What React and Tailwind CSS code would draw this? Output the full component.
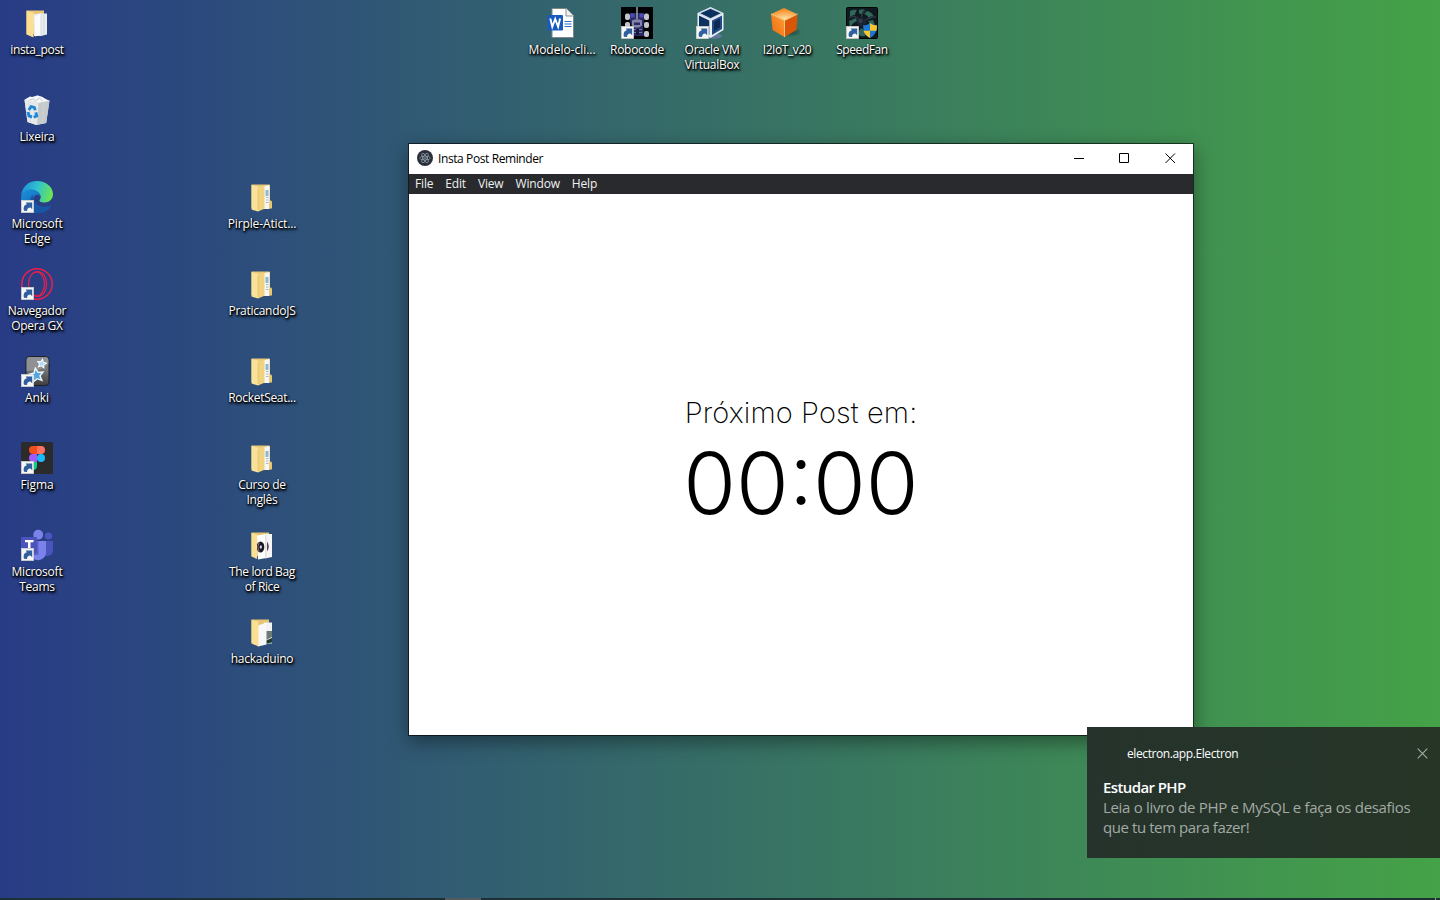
const Shortcut = () => (
  <g>
    <rect x=".3" y="19.300" width="12.400" height="12.400" fill="#f6f6f4" stroke="#cfcfcf" strokeWidth=".6" />
    <path d="M3 29.800C2 26 3.400 23.600 6 23.200L4.600 21.500h6.600v6.700L9.400 26.500c-2.400.2-3.400 1.200-3.300 3.600z" fill="#2f5f9e" />
  </g>
);

const Svg = ({ children }) => (
  <svg width="32" height="32" viewBox="0 0 32 32" className="block h-8 w-8 shrink-0">
    {children}
  </svg>
);

const FullFolder = () => (
  <Svg>
    <path d="M5.500 3.500H23q1 0 1 1V27H5.500z" fill="#e9c878" />
    <path d="M17 5.500 23.500 4v24H17z" fill="#f4f7f8" />
    <path d="M19.500 9h3v6h-3z" fill="#8fb9d8" />
    <path d="M20 16.500h2.500M20 19h2.500M20 21.500h2.500" stroke="#a9b7bf" />
    <path d="M23.500 19.500q2-.5 2.500 1v7h-3z" fill="#eac66c" />
    <path d="M5.500 4 12 5.500V30.500L5.500 28.500z" fill="#fbe29a" />
    <path d="M12 5.800 18.500 5v22.800L12 30.500z" fill="#f1d27e" />
    <path d="M12 8v21" stroke="#e0bc64" strokeWidth=".6" />
  </Svg>
);

const PostFolder = () => (
  <Svg>
    <path d="M5.500 3.500H23V27H5.500z" fill="#e7c572" />
    <path d="M12 7.500 18 6.500h8v21l-6 1.500h-7z" fill="#e9edf0" />
    <path d="M14 9.500 20 6v21.500l-6 2z" fill="#fbfbfb" />
    <path d="M20 7v21M23 7v21" stroke="#c7ced4" strokeWidth=".7" />
    <path d="M5.500 3.800 12.500 5.500V30.500L5.500 27.500z" fill="#fbdf92" />
  </Svg>
);

const DiscFolder = () => (
  <Svg>
    <path d="M5.500 3.500H23V27H5.500z" fill="#e7c572" />
    <path d="M18 5h8v23l-7 1.500z" fill="#f6f6f6" />
    <path d="M11 6.500 20 5v24l-8 1.500z" fill="#fff" />
    <path d="M19.800 6v23" stroke="#ccc" strokeWidth=".8" />
    <ellipse cx="14.500" cy="18" rx="3.800" ry="5.500" fill="#191b24" />
    <path d="M13.200 13.500q-3 4.500 0 9" stroke="#a3677d" fill="none" />
    <ellipse cx="14.800" cy="18" rx="1.100" ry="1.800" fill="#ddd" />
    <path d="M21 12.500q3.500 5 0 10" fill="#674151" />
    <path d="M5.500 3.800 11 5.500V30L5.500 27.500z" fill="#fbdf92" />
  </Svg>
);

const PhotoFolder = () => (
  <Svg>
    <path d="M5.500 3.500H23V27H5.500z" fill="#e7c572" />
    <path d="M18 6.500h8v21h-8z" fill="#f1f2f3" />
    <path d="M20 15h6v6l-6 3z" fill="#6c7b78" />
    <path d="M20 24.500 26 22v4.500l-6 1z" fill="#1f3a31" />
    <path d="M12 9.500 20.500 6.500v22l-8.500 2z" fill="#f8f8f8" />
    <path d="M5.500 3.800 12.500 5.500V30.500L5.500 27.500z" fill="#fbdf92" />
  </Svg>
);

const Bin = () => (
  <Svg>
    <path d="M3.500 5.500 14 2l14.500 4.500-3.300 22.500L15 31 6.500 28z" fill="#dfe2e4" />
    <path d="M3.500 6 17.500 9 16 31 6.500 28z" fill="#e6e8ea" />
    <path d="M17.500 9 28.500 6.500l-3.300 22.500L16 31z" fill="#c5cacd" />
    <path d="M4 5.500 9 2.500l4 1 3-2.300 5 1.500 6.500 4L18 8.500z" fill="#f7f8f8" />
    <path d="m8.500 6 4-1 2 2 4-3 3 3" stroke="#b3b9bd" strokeWidth=".8" fill="none" />
    <path d="M8 7.500 9.500 28M23 8.500 21 29" stroke="#d0d4d7" strokeWidth=".7" />
    <g fill="none" stroke="#1c87d6" strokeWidth="2.900">
      <path d="m7.800 16 2.300-3.400 3.200.8 1 2.800" />
      <path d="m7 18 1 4 3 1" />
      <path d="m12.700 23.300 3-1.400-.9-3.600" />
    </g>
  </Svg>
);

const Edge = () => (
  <Svg>
    <defs>
      <linearGradient id="edgeTop" x1="0" y1="0.300" x2="1" y2="0.500">
        <stop offset="0" stopColor="#1d8fd8" />
        <stop offset=".5" stopColor="#31c2d0" />
        <stop offset="1" stopColor="#6ce64e" />
      </linearGradient>
      <linearGradient id="edgeBody" x1="0" y1="0" x2=".6" y2="1">
        <stop offset="0" stopColor="#1b92dd" />
        <stop offset="1" stopColor="#1263b0" />
      </linearGradient>
    </defs>
    <path d="M0 15C1 6 7 0 16 0c9 0 16 6 16 13 0 5.500-4 8.500-8.500 8.500-4 0-6-1.300-4.500-3C21 15.500 19 12 15 10 10 7.500 3 9 0 15z" fill="url(#edgeTop)" />
    <path d="M0 16C1.500 10 6 8 10.500 8.500c5 .6 9 4 9 7.500-1-2.500-4-3-6-1-4 5 1 15.500 7 16.300C18.500 32 17 32 16 32 6 32-1 25 0 16z" fill="url(#edgeBody)" />
    <path d="M12 13.500c-1 6 4.500 12.300 11.500 12.300 3 .1 4.500-.5 6-1.200.7-.2 1 .3.700.8C27 30 22 32.500 16.500 32 9 30 6 19.500 12 13.500z" fill="#1757a6" />
    <Shortcut />
  </Svg>
);

const Opera = () => (
  <Svg>
    <g fill="none" stroke="#ee1e4e">
      <circle cx="16" cy="16" r="15.200" strokeWidth="1.500" />
      <ellipse cx="15.500" cy="16" rx="8" ry="12" strokeWidth="1.200" />
      <path d="M11 6C17 .5 25.500 5 25.500 16S17 31.500 11 26" strokeWidth="1.200" />
    </g>
    <Shortcut />
  </Svg>
);

const star = "M0-5.500 1.600-1.900 5.500-1.500 2.600 1.100 3.500 5 0 3 -3.500 5 -2.600 1.100 -5.500-1.500 -1.600-1.900z";

const Anki = () => (
  <Svg>
    <defs>
      <linearGradient id="ankiTile" x1="0" y1="0" x2="0" y2="1">
        <stop offset="0" stopColor="#777b7e" />
        <stop offset=".45" stopColor="#777" />
        <stop offset="1" stopColor="#3e3e40" />
      </linearGradient>
    </defs>
    <rect x="5" y="1.500" width="23" height="29" rx="3.500" fill="url(#ankiTile)" stroke="#1d1f24" />
    <path d="M5.500 16Q20 17 27.500 9V5q0-3-3-3H8.500q-3 0-3 3z" fill="#a4a6a8" opacity=".55" />
    <path d={star} transform="translate(20.800 8.500) rotate(10) scale(.8)" fill="#a8dcf8" stroke="#fff" strokeWidth="1.200" />
    <path d={star} transform="translate(15.500 20) rotate(-10) scale(1.250)" fill="#4fa7e0" stroke="#f4faff" strokeWidth="1.100" />
    <Shortcut />
  </Svg>
);

const Figma = () => (
  <Svg>
    <rect width="32" height="32" rx="1" fill="#2b2b2b" />
    <path d="M16 4H12a4 4 0 0 0 0 8h4z" fill="#f24e1e" />
    <path d="M16 4h4a4 4 0 0 1 0 8h-4z" fill="#ff7262" />
    <path d="M16 12H12a4 4 0 0 0 0 8h4z" fill="#a259ff" />
    <circle cx="20" cy="16" r="4" fill="#1abcfe" />
    <path d="M16 20H12a4 4 0 0 0 0 8 4 4 0 0 0 4-4z" fill="#0acf83" />
    <Shortcut />
  </Svg>
);

const Teams = () => (
  <Svg>
    <circle cx="27.500" cy="7" r="3.600" fill="#4d55c2" />
    <path d="M22 12h10v9.500q-.5 5-5.500 5.500H22z" fill="#4b53bc" />
    <circle cx="17.200" cy="5.700" r="4.900" fill="#7b83eb" />
    <path d="M10 12h15v12q-1 6.500-8 7.200-6-.5-7-6z" fill="#7b83eb" />
    <path d="M9 12h8.500v14H9z" fill="#4e55b8" opacity=".7" />
    <rect x="0" y="8" width="16" height="16" rx="1" fill="#4b53bc" />
    <path d="M4 11h8.500v2.300H9.500V19.500H7v-6.200H4z" fill="#fff" />
    <Shortcut />
  </Svg>
);

const Word = () => (
  <Svg>
    <path d="M6 1.500h14.500l7 7V30.500H6z" fill="#fff" stroke="#7d8688" />
    <path d="M20 1.500v7.500h7.500" fill="#f1f1f1" stroke="#8a8f92" />
    <path d="M18.500 14.500h7M18.500 17h7M18.500 19.500h7" stroke="#2b6cc4" strokeWidth="1.100" />
    <rect x="1.500" y="8" width="15.500" height="15.500" rx="1" fill="#185abd" />
    <path d="m4.300 11.500 2 8.300 2.900-7.800 2.900 7.800 2-8.300" fill="none" stroke="#fff" strokeWidth="1.900" />
  </Svg>
);

const Robot = () => (
  <Svg>
    <rect width="32" height="32" fill="#020204" />
    <g fill="#c3c5cb">
      <rect x="4" y="6.500" width="5" height="6.500" rx="2" />
      <rect x="23" y="6.500" width="5" height="6.500" rx="2" />
      <rect x="4" y="15" width="5" height="6" rx="2" />
      <rect x="23" y="15" width="5" height="6" rx="2" />
      <rect x="23" y="24" width="5" height="6" rx="2" />
    </g>
    <path d="M9 6h14v8l-1 6 1 9H11V20L9 14z" fill="#2b2b68" />
    <path d="M9.500 6.500h4v4h-4zM18.500 6.500h4v4h-4z" fill="#4c4cae" />
    <path d="M15.300 0h1.400v12h-1.400z" fill="#a9aab4" />
    <path d="M11 13.500q5-2.500 10 0v5l-3 2h-4l-3-2z" fill="#8584a8" />
    <path d="M13 15.500h6v2.500h-6z" fill="#292a60" />
    <path d="M12 22.500h9M12 25.500h9" stroke="#77779e" />
    <path d="M15 22h3v6h-3z" fill="#17173b" />
    <Shortcut />
  </Svg>
);

const VBox = () => (
  <Svg>
    <ellipse cx="17" cy="29" rx="9" ry="2.700" fill="#63799b" />
    <path d="m14.500 0 13 6v17l-13 8-13-8V6z" fill="#eaf0f8" />
    <path d="m14.500 1.800 10.300 4.500-10.300 4.900L4.200 6.300z" fill="#0d315f" />
    <path d="m3 8.500 10.300 5V28L3 22z" fill="#0d315f" />
    <path d="m26 8.500-10 5V28l10-6z" fill="#244a83" />
    <path d="m18 14.800 6-3v8.500l-6 3.800z" fill="#0b2951" />
    <path d="m14.500 1.300 11.500 5-11.500 6L3 6.300z" fill="none" stroke="#aebfd8" strokeWidth=".6" />
    <Shortcut />
  </Svg>
);

const Box = () => (
  <Svg>
    <defs>
      <radialGradient id="boxTop" cx=".55" cy=".9" r=".8">
        <stop offset="0" stopColor="#ffe3a8" />
        <stop offset="1" stopColor="#f78b20" />
      </radialGradient>
      <linearGradient id="boxLeft" x1="0" y1="1" x2="1" y2="0">
        <stop offset="0" stopColor="#ef6a0f" />
        <stop offset="1" stopColor="#ff9d35" />
      </linearGradient>
      <radialGradient id="boxShade">
        <stop offset="0" stopColor="#14362b" stopOpacity=".7" />
        <stop offset="1" stopColor="#14362b" stopOpacity="0" />
      </radialGradient>
    </defs>
    <ellipse cx="20" cy="25" rx="11" ry="5" fill="url(#boxShade)" />
    <path d="m13 1 13 6-12 6.500L0 7z" fill="url(#boxTop)" />
    <path d="m0 7 13.500 6.500V30L1.500 23z" fill="url(#boxLeft)" />
    <path d="M26.500 7l-1 16-12 7V13.500z" fill="#d95606" />
    <path d="M0 7l13.500 6.500L26.500 7M13.500 13.500V30" fill="none" stroke="#ffcf85" strokeWidth=".9" />
  </Svg>
);

const Fan = () => (
  <Svg>
    <rect x=".5" y=".5" width="31" height="31" rx="1" fill="#10191f" stroke="#030607" />
    <path
      d="M4 4q4-2 7-1-2 2-2 5-3 0-5 2zM13 3l5-1-2 6-3-2zM21 4q5 1 7 6l-5 2q-1-4-5-5zM3 14l7-3 1 3q-5 2-7 7zM27 13l2 5-5 1q0-3-2-5zM13 24l2-3q3 3 6 2l-2 6q-5 1-7-2z"
      fill="#2f6758"
    />
    <path d="M3 11Q9 7 15 14M19 3q-5 5-3 11M30 10q-7-1-12 5" stroke="#28343f" strokeWidth="1.500" fill="none" />
    <circle cx="15.500" cy="15" r="4.500" fill="#1b2430" />
    <circle cx="14.500" cy="14" r="2.200" fill="#303c4c" />
    <path d="M24 16q3 2.500 7 2.500 0 9-7 12.500-7-3.500-7-12.500 4 0 7-2.500z" fill="#1d78d3" />
    <path d="M24 16q3 2.500 7 2.500 0 3-.5 5.300H24zM24 23.800V31q-5-2.500-6.500-7.200z" fill="#f8c62e" />
    <Shortcut />
  </Svg>
);

const items = [
  { icon: PostFolder, lines: ["insta_post"], cell: "col-start-1 row-start-1", fit: "tracking-[-0.35px]" },
  { icon: Bin, lines: ["Lixeira"], cell: "col-start-1 row-start-2", fit: "tracking-[-0.3px]" },
  { icon: Edge, lines: ["Microsoft", "Edge"], cell: "col-start-1 row-start-3", fit: "tracking-[-0.22px]" },
  { icon: Opera, lines: ["Navegador", "Opera GX"], cell: "col-start-1 row-start-4", fit: "tracking-[-0.3px]" },
  { icon: Anki, lines: ["Anki"], cell: "col-start-1 row-start-5", fit: "tracking-[-0.1px]" },
  { icon: Figma, lines: ["Figma"], cell: "col-start-1 row-start-6", fit: "tracking-[-0.1px]" },
  { icon: Teams, lines: ["Microsoft", "Teams"], cell: "col-start-1 row-start-7", fit: "tracking-[-0.22px]" },
  { icon: FullFolder, lines: ["Pirple-Atict..."], cell: "col-start-4 row-start-3", fit: "tracking-[-0.13px]" },
  { icon: FullFolder, lines: ["PraticandoJS"], cell: "col-start-4 row-start-4", fit: "tracking-[-0.27px]" },
  { icon: FullFolder, lines: ["RocketSeat..."], cell: "col-start-4 row-start-5", fit: "tracking-[-0.3px]" },
  { icon: FullFolder, lines: ["Curso de", "Inglês"], cell: "col-start-4 row-start-6", fit: "tracking-[-0.3px]" },
  { icon: DiscFolder, lines: ["The lord Bag", "of Rice"], cell: "col-start-4 row-start-7", fit: "tracking-[-0.38px]" },
  { icon: PhotoFolder, lines: ["hackaduino"], cell: "col-start-4 row-start-8", fit: "tracking-[-0.25px]" },
  { icon: Word, lines: ["Modelo-cli..."], cell: "col-start-8 row-start-1", fit: "tracking-[-0.02px]" },
  { icon: Robot, lines: ["Robocode"], cell: "col-start-9 row-start-1", fit: "tracking-[-0.3px]" },
  { icon: VBox, lines: ["Oracle VM", "VirtualBox"], cell: "col-start-10 row-start-1", fit: "tracking-[-0.3px]" },
  { icon: Box, lines: ["I2IoT_v20"], cell: "col-start-11 row-start-1", fit: "tracking-[-0.42px]" },
  { icon: Fan, lines: ["SpeedFan"], cell: "col-start-12 row-start-1", fit: "tracking-[-0.42px]" },
];

const DesktopItem = ({ icon: Icon, lines, cell, fit }) => (
  <div className={`${cell} flex flex-col items-center pt-[7px]`}>
    <Icon />
    <div className={`mt-[3px] flex flex-col items-center pl-px text-xs leading-[15px] whitespace-nowrap text-white [text-shadow:1px_1px_2px_#000,0_1px_2px_#000,1px_2px_3px_#000] ${fit}`}>
      {lines.map((line) => (
        <span key={line}>{line}</span>
      ))}
    </div>
  </div>
);

const Electron = () => (
  <svg width="16" height="16" viewBox="0 0 16 16" className="block">
    <circle cx="8" cy="8" r="8" fill="#2b2e3a" />
    <g fill="none" stroke="#9fb6be" strokeWidth=".6">
      <ellipse cx="8" cy="8" rx="5.400" ry="2" />
      <ellipse cx="8" cy="8" rx="5.400" ry="2" transform="rotate(60 8 8)" />
      <ellipse cx="8" cy="8" rx="5.400" ry="2" transform="rotate(120 8 8)" />
    </g>
    <circle cx="8" cy="8" r=".7" fill="#b5d2da" />
  </svg>
);

const controls = ["M1 5.500h10", "M.5.500h9v9h-9z", "M.500.500l9.500 9.500M10 .500l-9.500 9.500"];

const AppWindow = () => (
  <section className="absolute top-[143px] left-[408px] flex h-[593px] w-[786px] flex-col border border-black/60 bg-white bg-clip-padding shadow-[0_6px_18px_rgba(0,0,0,0.4)]">
    <header className="flex h-[30px] shrink-0 items-center pl-2 text-xs text-black">
      <div className="-mt-0.5"><Electron /></div>
      <span className="ml-[5px] tracking-[-0.4px]">Insta Post Reminder</span>
      <div className="-mt-px ml-auto flex">
        {controls.map((d) => (
          <div key={d} className="flex w-[46px] justify-center">
            <svg width="10" height="11" viewBox="0 0 10 11" className="overflow-visible">
              <path d={d} fill="none" stroke="#000" strokeWidth="1" />
            </svg>
          </div>
        ))}
      </div>
    </header>
    <nav className="flex h-5 shrink-0 items-center gap-3 bg-[#292a2d] pl-1.5 text-xs tracking-[-0.17px] text-[#f0f0f1]">
      <span>File</span>
      <span>Edit</span>
      <span>View</span>
      <span>Window</span>
      <span>Help</span>
    </nav>
    <main className="flex flex-1 flex-col items-center pt-[201px] font-['Inter',sans-serif] text-black">
      <h1 className="text-[29px] leading-[36px] font-extralight tracking-[0.12px] whitespace-nowrap">Próximo Post em:</h1>
      <p className="text-[85.500px] leading-[104px] font-light whitespace-nowrap">00:00</p>
    </main>
  </section>
);

const Toast = () => (
  <aside className="absolute top-[727px] left-[1087px] flex h-[131px] w-[353px] flex-col bg-linear-to-r from-[#25332c] to-[#263526] pl-4 text-white">
    <div className="flex h-[50px] items-center pt-1 pr-3 pl-6">
      <span className="text-xs tracking-[-0.4px]">electron.app.Electron</span>
      <svg width="11" height="11" viewBox="0 0 11 11" className="-mt-0.5 ml-auto">
        <path d="M.7.700l9.600 9.600M10.300.700L.7 10.300" stroke="#a4aca6" strokeWidth="1.100" />
      </svg>
    </div>
    <strong className="text-[15px] leading-5 font-semibold tracking-[-0.6px]">Estudar PHP</strong>
    <p className="text-[15px] leading-5 tracking-[-0.32px] whitespace-nowrap text-[#a3aaa5]">
      Leia o livro de PHP e MySQL e faça os desafios
      <br />
      <span className="tracking-[-0.42px]">que tu tem para fazer!</span>
    </p>
  </aside>
);

export default function App() {
  return (
    <div className="relative flex h-[900px] w-[1440px] flex-col overflow-hidden bg-linear-to-r/srgb from-[#283c86] to-[#45a247] font-['Open_Sans',sans-serif]">
      <div className="-ml-px grid flex-1 auto-rows-[87px] grid-cols-[repeat(12,75px)]">
        {items.map((item) => (
          <DesktopItem key={item.cell} {...item} />
        ))}
      </div>
      <div className="flex h-0.5 bg-[#1d3034]">
        <div className="ml-[445px] w-9 bg-[#535b5f]" />
        <div className="mr-1 ml-auto w-px bg-[#8b9a8e]" />
      </div>
      <AppWindow />
      <Toast />
    </div>
  );
}
